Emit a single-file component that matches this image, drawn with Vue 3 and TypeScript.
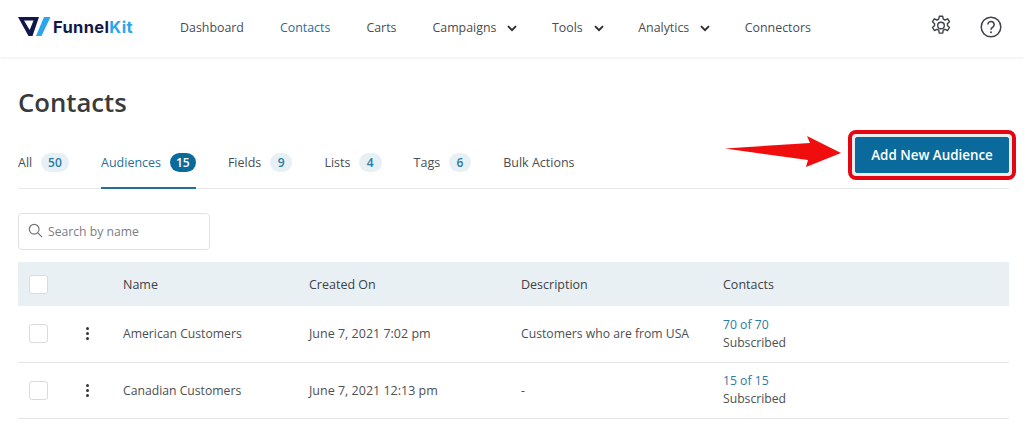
<script setup lang="ts">
interface NavItem { label: string; caret?: boolean; active?: boolean }
interface Tab { label: string; count?: number; active?: boolean }
interface Row { name: string; created: string; description: string; contacts: string }

const nav: NavItem[] = [
  { label: 'Dashboard' },
  { label: 'Contacts', active: true },
  { label: 'Carts' },
  { label: 'Campaigns', caret: true },
  { label: 'Tools', caret: true },
  { label: 'Analytics', caret: true },
  { label: 'Connectors' },
]
const tabs: Tab[] = [
  { label: 'All', count: 50 },
  { label: 'Audiences', count: 15, active: true },
  { label: 'Fields', count: 9 },
  { label: 'Lists', count: 4 },
  { label: 'Tags', count: 6 },
  { label: 'Bulk Actions' },
]
const rows: Row[] = [
  { name: 'American Customers', created: 'June 7, 2021 7:02 pm', description: 'Customers who are from USA', contacts: '70 of 70' },
  { name: 'Canadian Customers', created: 'June 7, 2021 12:13 pm', description: '-', contacts: '15 of 15' },
]
</script>

<template>
  <div class="page">
    <header class="topbar">
      <div class="logo">
        <svg width="34" height="21" viewBox="0 0 34 21">
          <path d="M0 1H21L14.5 20H10.5Z M6 4.6L11.7 14L15.5 4.6Z" fill="#12174a" fill-rule="evenodd" />
          <path d="M26 1H32.5L23.5 20H18Z" fill="#2ba6ec" />
        </svg>
        <span class="logo-text">Funnel<em>Kit</em></span>
      </div>
      <nav class="nav">
        <a v-for="n in nav" :key="n.label" class="nav-item" :class="{ active: n.active }">
          {{ n.label }}
          <svg v-if="n.caret" class="caret" width="10" height="7" viewBox="0 0 10 7">
            <path d="M1 1.2L5 5.2L9 1.2" fill="none" stroke="#2c2c2c" stroke-width="1.9" />
          </svg>
        </a>
      </nav>
      <div class="top-icons">
        <svg class="gear" width="24" height="24" viewBox="0 0 24 24" fill="none" stroke="#3f4347" stroke-width="1.4" stroke-linejoin="round">
          <path d="M10.3 2.3h3.4l.6 2.9 1.7.8 2.7-1.2 1.8 2.9-2.1 2c.1.6.1 1.2 0 1.8l2.1 2-1.8 3-2.7-1.2-1.7.9-.6 2.9h-3.4l-.6-2.9-1.7-.9-2.7 1.2-1.8-3 2.1-2a6 6 0 0 1 0-1.8l-2.1-2 1.8-2.9L8 6l1.7-.8z" />
          <circle cx="12" cy="11.5" r="3.3" />
        </svg>
        <svg width="22" height="22" viewBox="0 0 22 22" fill="none" stroke="#3f4347">
          <circle cx="11" cy="11" r="9.8" stroke-width="1.5" />
          <path d="M7.9 8.6a3.1 3.1 0 1 1 4.9 2.5c-1.1.8-1.8 1.3-1.8 2.6" stroke-width="1.6" />
          <circle cx="11" cy="16.3" r="1" fill="#3f4347" stroke="none" />
        </svg>
      </div>
    </header>

    <main class="content">
      <h1 class="title">Contacts</h1>

      <div class="tabs">
        <a v-for="t in tabs" :key="t.label" class="tab" :class="{ active: t.active }">
          {{ t.label }}
          <span v-if="t.count !== undefined" class="badge">{{ t.count }}</span>
        </a>
        <div class="action">
          <svg class="arrow" width="118" height="32" viewBox="0 0 118 32">
            <path d="M0 12.5L85 7L82 0L116 17L81 31L83 24Z" fill="#f00d0d" />
          </svg>
          <div class="highlight">
            <button class="add-btn" type="button">Add New Audience</button>
          </div>
        </div>
      </div>

      <div class="search">
        <svg width="15" height="15" viewBox="0 0 16 16" fill="none" stroke="#6d7175" stroke-width="1.2">
          <circle cx="6.6" cy="6.6" r="5.2" />
          <path d="M10.5 10.5L15 15" />
        </svg>
        <span>Search by name</span>
      </div>

      <div class="table">
        <div class="row head">
          <div class="lead"><span class="check"></span></div>
          <div>Name</div>
          <div>Created On</div>
          <div>Description</div>
          <div>Contacts</div>
        </div>
        <div v-for="r in rows" :key="r.name" class="row body">
          <div class="lead">
            <span class="check"></span>
            <span class="dots"><i></i><i></i><i></i></span>
          </div>
          <div>{{ r.name }}</div>
          <div class="date">{{ r.created }}</div>
          <div>{{ r.description }}</div>
          <div class="stack">
            <a class="link">{{ r.contacts }}</a>
            <span>Subscribed</span>
          </div>
        </div>
      </div>
    </main>
  </div>
</template>

<style>
html, body { margin: 0; background: #fff; overflow: hidden; }
</style>

<style scoped>
.page {
  width: 1024px;
  height: 425px;
  overflow: hidden;
  font-family: "Open Sans", "Noto Sans", sans-serif;
  font-size: 12.2px;
  color: #4d4f52;
  background: #fff;
}
.topbar {
  height: 57px;
  box-sizing: border-box;
  display: flex;
  align-items: center;
  padding: 0 22px 3px 18px;
  box-shadow: 0 1px 3px rgba(0, 0, 0, 0.08);
  font-size: 12.4px;
}
.logo { display: flex; align-items: center; width: 162px; }
.logo svg { margin-top: -1px; flex: none; }
.logo-text {
  font-family: "Inter", sans-serif;
  font-weight: 700;
  font-size: 16.5px;
  color: #12174a;
  margin-left: 1px;
  letter-spacing: 0.35px;
  white-space: nowrap;
}
.logo-text em { font-style: normal; color: #2ba6ec; }
.nav { display: flex; align-items: center; gap: 36px; }
.nav-item { display: flex; align-items: center; gap: 11px; color: #4b4d50; white-space: nowrap; }
.nav-item.active { color: #1f6f99; }
.caret { margin-top: 2px; margin-right: -1.5px; }
.top-icons { margin-left: auto; display: flex; align-items: center; gap: 27px; }
.gear { margin-top: -2px; }
.content { padding: 0 15px 0 18px; }
.title {
  margin: 29px 0 0;
  font-size: 25.7px;
  line-height: 34px;
  font-weight: 600;
  color: #3a3a3a;
}
.tabs {
  margin-top: 7px;
  height: 62px;
  padding-top: 9px;
  box-sizing: border-box;
  display: flex;
  align-items: stretch;
  gap: 32px;
  border-bottom: 1px solid #e6e9ec;
}
.tab {
  position: relative;
  display: flex;
  align-items: center;
  gap: 8.5px;
  color: #4b4d50;
  white-space: nowrap;
  font-size: 12.5px;
}
.tab.active { color: #1f6f99; }
.tab.active::after {
  content: "";
  position: absolute;
  left: 0;
  right: 0;
  bottom: -1px;
  height: 2px;
  background: #1f6f99;
}
.badge {
  min-width: 8px;
  height: 19px;
  line-height: 19px;
  padding: 0 7.3px;
  border-radius: 10px;
  background: #e6f0f5;
  color: #2b7ba3;
  font-size: 12px;
  font-weight: 600;
  text-align: center;
}
.tab.active .badge { background: #0a6a9b; color: #fff; padding: 0 6.3px; }
.action { margin-left: auto; position: relative; display: flex; align-items: flex-start; }
.arrow { position: absolute; left: -123px; top: 0; }
.highlight {
  box-sizing: border-box;
  width: 168px;
  height: 50px;
  margin-right: -7px;
  margin-top: -6px;
  padding: 3px;
  border: 4px solid #e30613;
  border-radius: 8px;
  background: #e9edef;
}
.add-btn {
  display: block;
  width: 100%;
  height: 100%;
  border: 1px solid #0a6a9b;
  border-radius: 2px;
  background: #0a6a9b;
  color: #fff;
  font-family: inherit;
  font-size: 13.4px;
  font-weight: 600;
  padding: 0;
}
.search {
  margin-top: 24px;
  width: 192px;
  height: 37px;
  box-sizing: border-box;
  border: 1px solid #dfe3e6;
  border-radius: 4px;
  display: flex;
  align-items: center;
  gap: 5px;
  padding-left: 9px;
  color: #7b7e81;
}
.search svg { margin-top: -3px; }
.table { margin-top: 12px; width: 991px; }
.row {
  display: grid;
  grid-template-columns: 105px 186px 212px 202px 1fr;
  align-items: center;
}
.head { height: 44px; background: #e8f0f4; color: #3f4144; font-weight: 500; font-size: 12.5px; }
.body { height: 56.5px; box-sizing: border-box; border-bottom: 1px solid #e4e7ea; }
.date { font-size: 12.5px; }
.lead { display: flex; align-items: center; padding-left: 11px; gap: 38px; }
.check {
  width: 19px;
  height: 19px;
  box-sizing: border-box;
  border: 1px solid #d9dcdf;
  border-radius: 3px;
  background: #fff;
}
.dots { display: flex; flex-direction: column; gap: 2px; align-items: center; }
.dots i { width: 3px; height: 3px; border-radius: 50%; background: #33363a; }
.stack { display: flex; flex-direction: column; line-height: 18px; }
.link { color: #2b7ba3; }
</style>
